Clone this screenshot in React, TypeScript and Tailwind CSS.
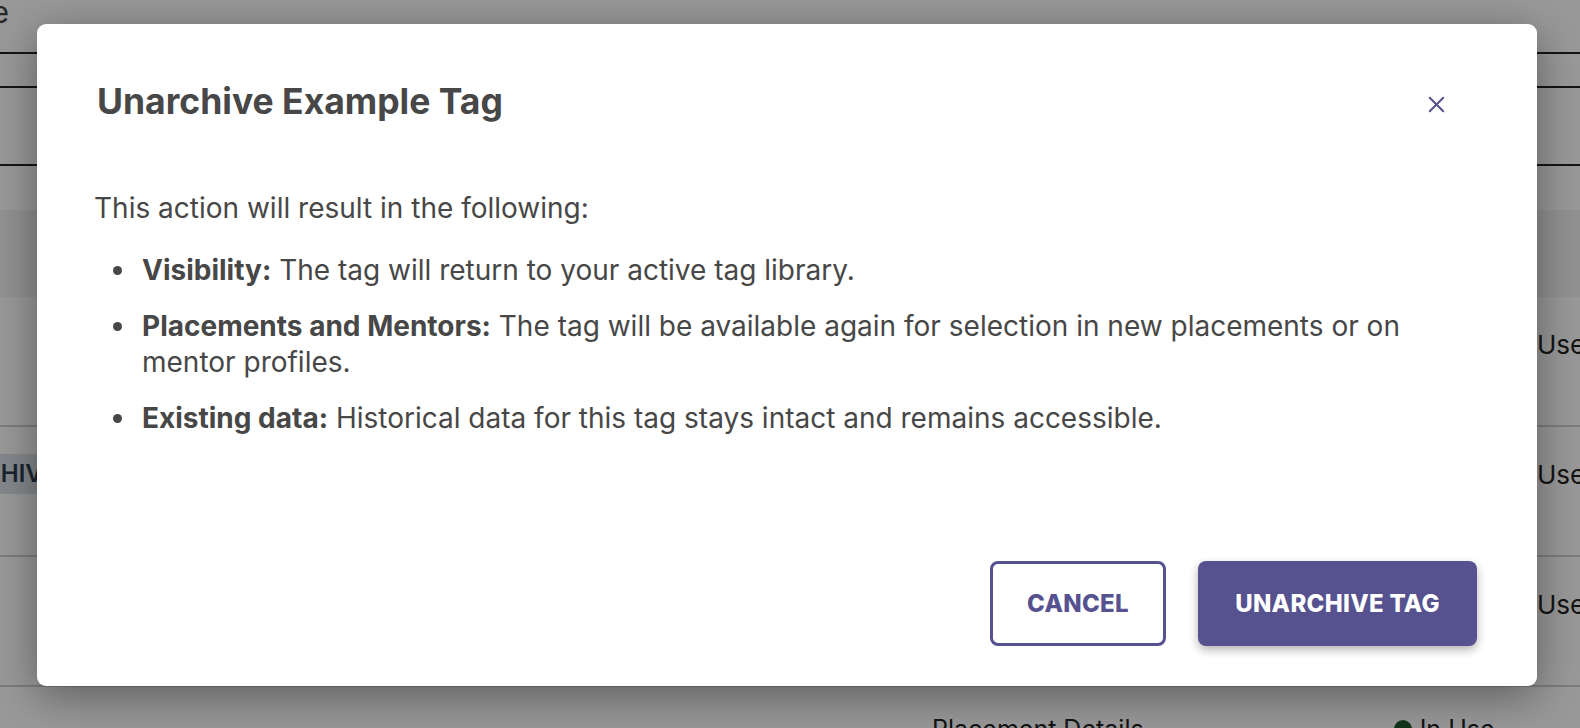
import { X } from 'lucide-react';

const rows = [
  { id: 1, status: 'Active' },
  { id: 2, status: 'Archived' },
  { id: 3, status: 'Active' },
];

const effects = [
  { label: 'Visibility:', text: 'The tag will return to your active tag library.' },
  {
    label: 'Placements and Mentors:',
    text: 'The tag will be available again for selection in new placements or on mentor profiles.',
  },
  { label: 'Existing data:', text: 'Historical data for this tag stays intact and remains accessible.' },
];

function BackgroundPage() {
  return (
    <div className="h-[728px] w-full overflow-hidden bg-white text-[#333]">
      {/* Page header */}
      <div className="h-[54px] border-b-2 border-[#222]">
        <div className="flex w-[9px] justify-end whitespace-nowrap text-[30px] leading-[24px] text-[#444]">
          Example Tag Usage
        </div>
      </div>
      <div className="h-[34px] border-b-2 border-[#222]" />
      <div className="h-[78px] border-b-2 border-[#222]" />
      <div className="h-[44px]" />
      {/* Table header */}
      <div className="h-[87px] bg-[#f4f4f5]" />
      {/* Table rows */}
      {rows.map((row) => (
        <div
          key={row.id}
          className="flex h-[130px] items-start justify-between border-b-2 border-[#d0d0d0]"
        >
          <div className="pt-[27px]">
            {row.status === 'Archived' && (
              <span className="-ml-[62px] block rounded bg-[#dde3ea] px-3 py-[6px] text-[24px] font-semibold leading-[28px] text-[#2c3e50]">
                ARCHIVED
              </span>
            )}
          </div>
          <span className="mr-[-45px] w-[88px] pt-[33px] text-[26px] leading-[30px] text-[#222]">Used</span>
        </div>
      ))}
      <div className="flex pt-[27px] text-[25px] leading-[30px] text-[#222]">
        <span className="ml-[932px]">Placement Details</span>
        <span className="ml-[250px] flex items-center gap-2">
          <span className="h-[18px] w-[18px] rounded-full bg-[#1e5a2b]" />
          In Use
        </span>
      </div>
    </div>
  );
}

export default function App() {
  return (
    <div
      className="relative h-[728px] w-[1580px] overflow-hidden"
      style={{ fontFamily: 'Inter, "Noto Sans", sans-serif' }}
    >
      <BackgroundPage />

      {/* Backdrop */}
      <div className="absolute inset-0 bg-black/40" />

      {/* Dialog */}
      <div className="absolute left-[37px] top-[24px] flex h-[662px] w-[1500px] flex-col rounded-[9px] bg-white px-[57px] pb-[40px] pt-[58px] shadow-[0_10px_45px_rgba(0,0,0,0.4)]">
        <div className="flex items-center justify-between">
          <h2 className="pl-[3px] text-[35.5px] font-bold leading-[40px] text-[#474747]">Unarchive Example Tag</h2>
          <button className="mr-[30px] mt-[4px] text-[#56518f]" aria-label="Close">
            <X className="h-[27px] w-[27px]" strokeWidth={1.8} />
          </button>
        </div>

        <p className="mt-[68px] text-[28px] leading-[36px] text-[#474747]">
          This action will result in the following:
        </p>

        <ul className="mt-[26px] space-y-[19px] pr-[20px] text-[28px] leading-[36.5px] text-[#474747]">
          {effects.map((item) => (
            <li key={item.label} className="flex items-start">
              <span className="ml-[19px] mr-[20px] mt-[14px] h-[9px] w-[9px] shrink-0 rounded-full bg-[#474747]" />
              <span>
                <strong className="font-bold">{item.label}</strong> {item.text}
              </span>
            </li>
          ))}
        </ul>

        <div className="mt-auto flex justify-end gap-[32px] pr-[3px]">
          <button className="flex h-[85px] w-[176px] items-center justify-center rounded-[8px] border-[3px] border-[#56518f] bg-white text-[24px] font-extrabold tracking-[0.3px] text-[#56518f]">
            CANCEL
          </button>
          <button className="flex h-[85px] w-[279px] items-center justify-center rounded-[8px] bg-[#56518f] text-[24px] font-extrabold tracking-[0.3px] text-white shadow-[0_4px_10px_rgba(0,0,0,0.3)]">
            UNARCHIVE TAG
          </button>
        </div>
      </div>
    </div>
  );
}
